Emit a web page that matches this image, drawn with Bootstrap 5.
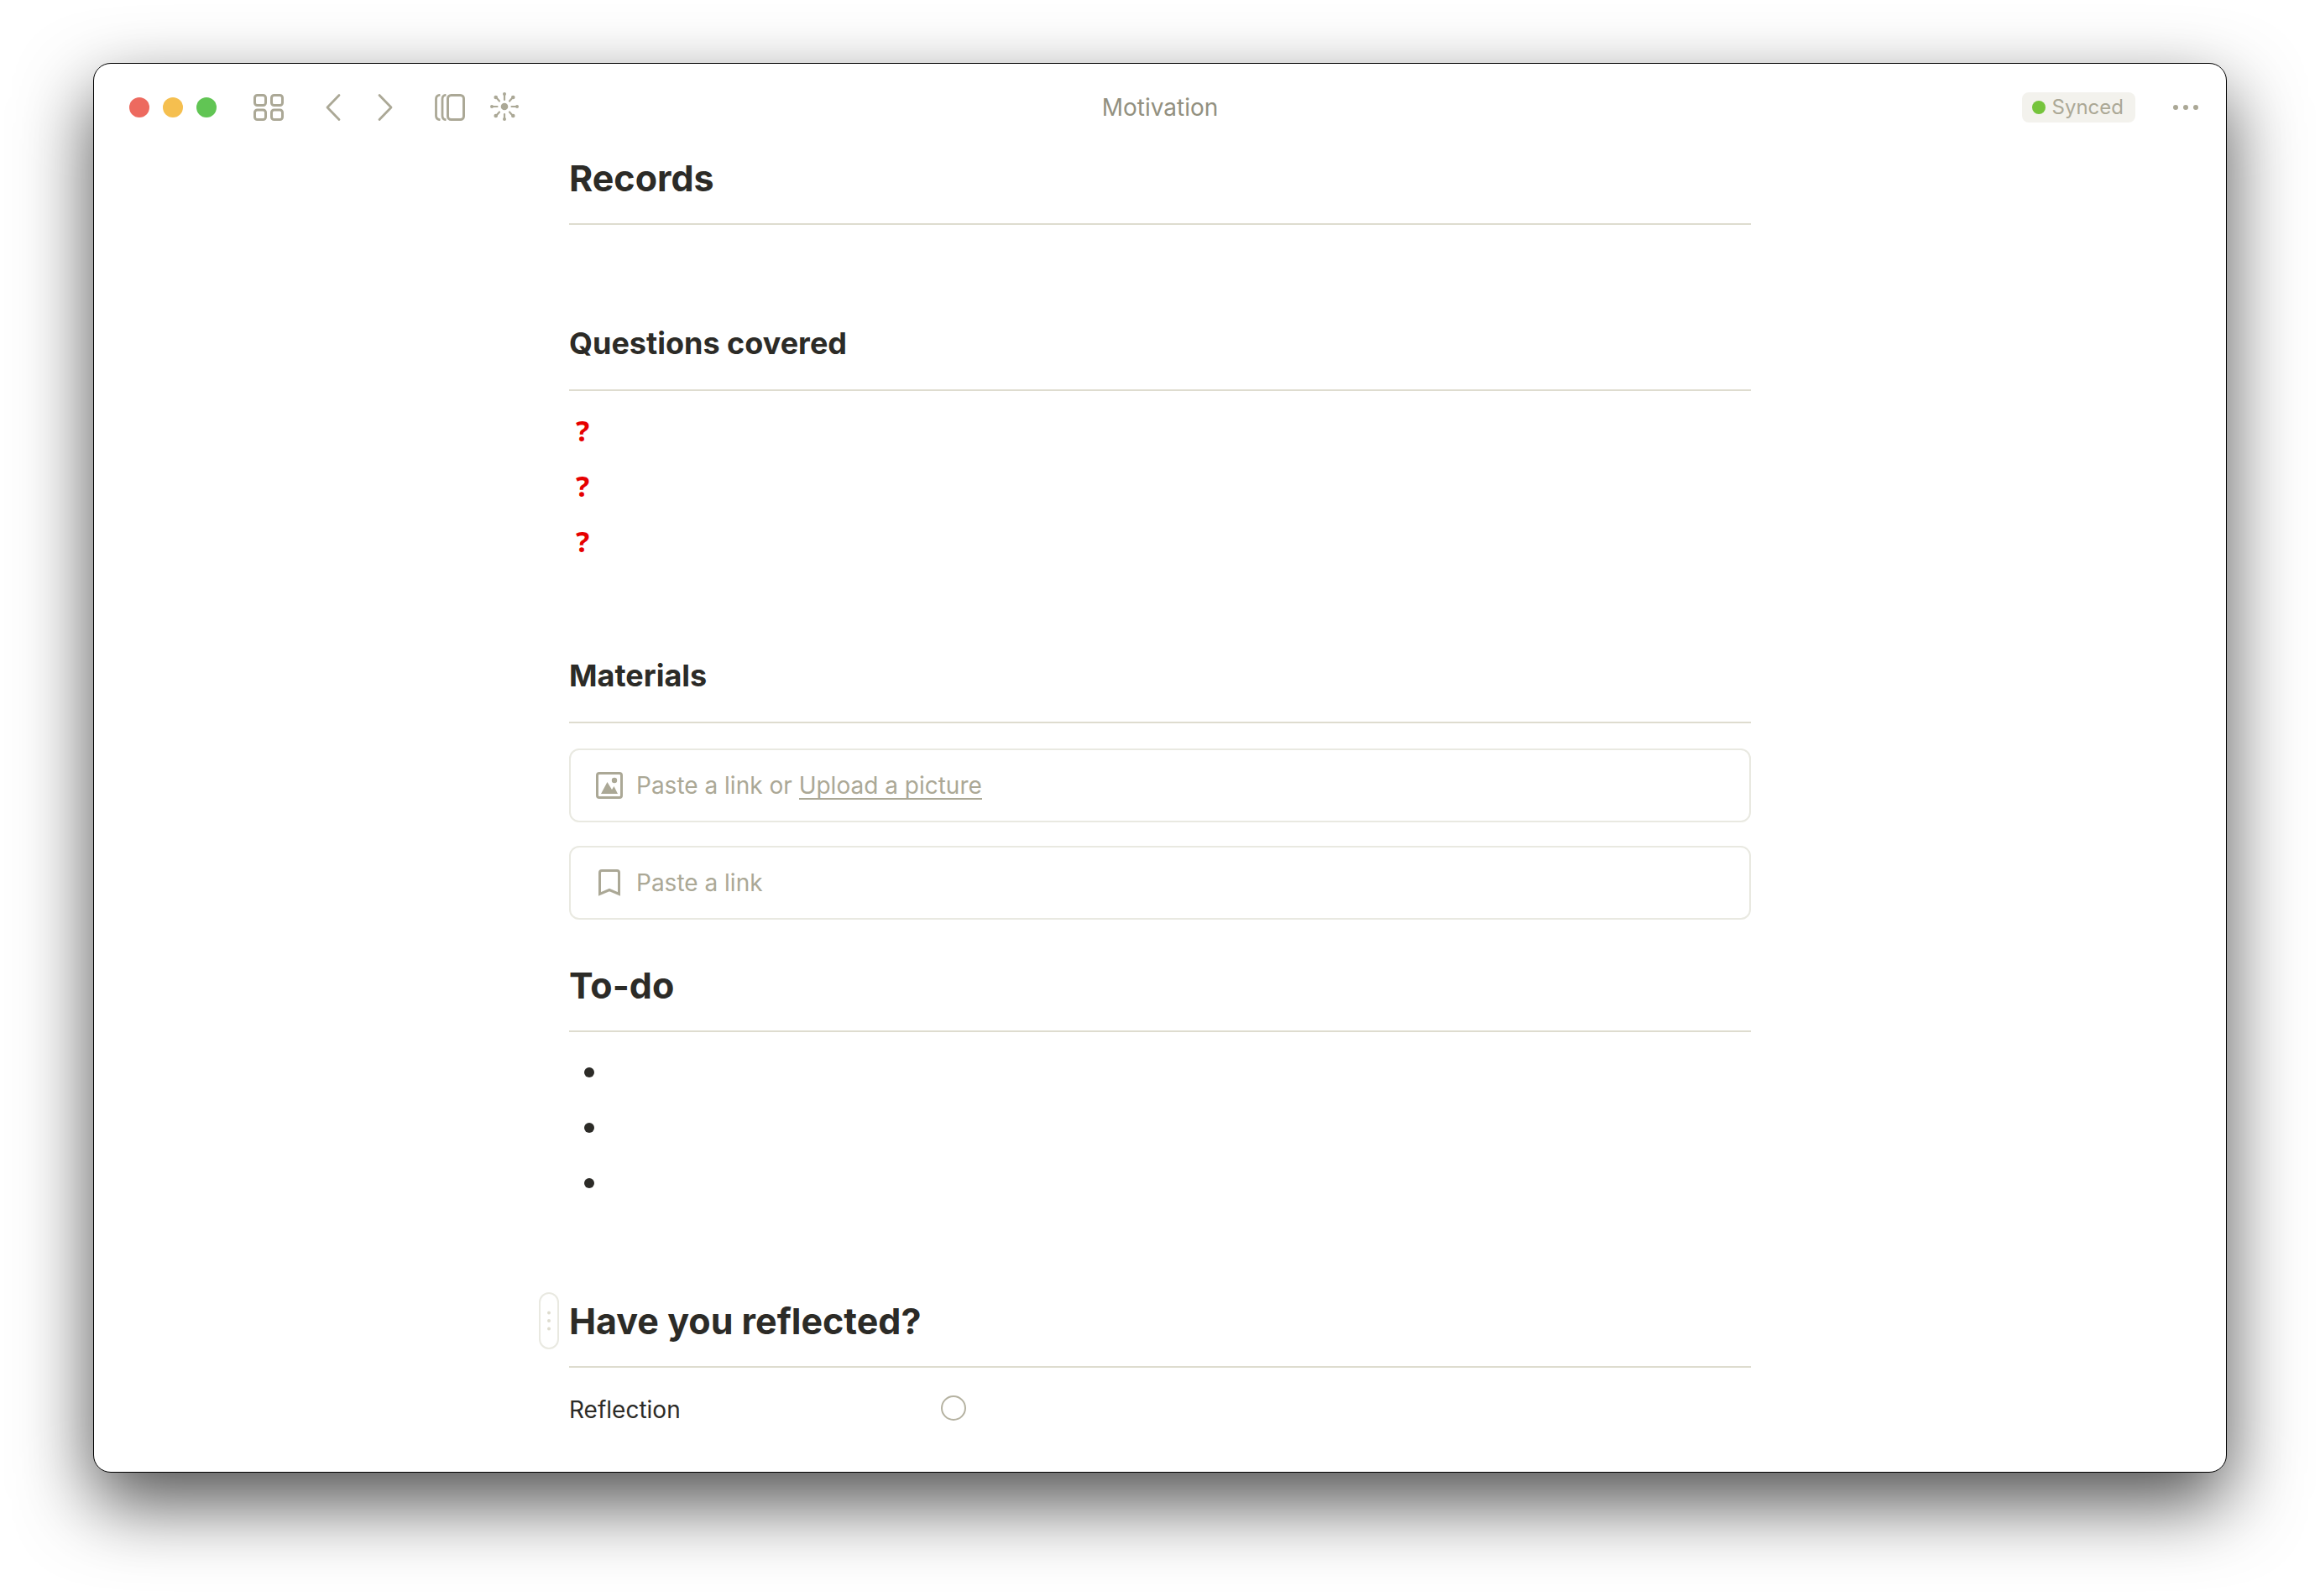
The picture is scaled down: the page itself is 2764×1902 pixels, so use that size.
<!DOCTYPE html>
<html lang="en">
<head>
<meta charset="utf-8">
<meta name="viewport" content="width=device-width, initial-scale=1">
<title>Motivation</title>
<link href="https://cdn.jsdelivr.net/npm/bootstrap@5.3.0/dist/css/bootstrap.min.css" rel="stylesheet">
<style>
  :root { --ink: #2c2b27; --muted: #aba896; --rule: #dedccf; --edge: #e9e9e1; }
  body { font-family: Inter, "Liberation Sans", sans-serif; font-size: 28px; line-height: 36px; color: var(--ink); background: #fff; padding: 75px 111px 147px; }
  .app-window { border: 1px solid #000; border-radius: 21px; background: #fff; box-shadow: 0 36px 88px rgba(0,0,0,.69); }
  .titlebar { height: 104px; padding: 0 33px; }
  .side { flex: 1 1 0; }
  .lights { margin: 0 44px 0 9px; }
  .light { width: 24px; height: 24px; border-radius: 50%; border: 0; padding: 0; }
  .light-close { background: #ed6a5f; }
  .light-min { background: #f5bf4f; }
  .light-zoom { background: #61c554; }
  .tool { border: 0; padding: 0; background: none; color: var(--muted); display: flex; }
  .tool svg, .field svg, .grip svg { display: block; }
  .history { gap: 44px; margin: 0 50px; }
  .views { gap: 30px; }
  .doc-title { color: #929080; }
  .sync { height: 36px; padding: 0 14px 0 12px; gap: 8px; border-radius: 8px; background: #f3f2ed; color: var(--muted); font-size: 24px; margin-right: 45px; }
  .sync-dot { width: 16px; height: 16px; border-radius: 50%; background: #75c43c; }
  .doc { max-width: 1408px; padding: 4px 0 43px; }
  .doc h2, .doc h3 { font-weight: 700; margin: 0; border-bottom: 2px solid var(--rule); }
  .doc h2 { font-size: 43px; line-height: 56px; padding-bottom: 26px; }
  .doc h3 { font-size: 36px; line-height: 48px; padding-bottom: 31px; margin-top: 36px; }
  .block-list { margin: 15px 0 0; }
  .block-list li, .blank { height: 66px; }
  .after-rule { margin-top: 15px; }
  .question { color: #e60000; font-family: "Noto Sans", sans-serif; font-weight: 700; font-size: 34px; padding: 0 0 2px 8px; }
  .bullet { width: 12px; height: 12px; border-radius: 50%; background: var(--ink); margin-left: 18px; }
  .fields { margin: 30px 0 50px; gap: 28px; }
  .field { height: 88px; border: 2px solid var(--edge); border-radius: 12px; padding: 0 30px; gap: 16px; color: var(--muted); }
  .field a { color: inherit; text-decoration: none; border-bottom: 2px solid var(--muted); line-height: 30px; display: inline-block; }
  .field input { border: 0; padding: 0; outline: 0; background: none; color: inherit; line-height: 36px; }
  .field input::placeholder { color: var(--muted); opacity: 1; }
  .active-block { margin-top: 37px; }
  .grip { left: -36px; top: -6px; width: 24px; height: 68px; border: 2px solid var(--edge); border-radius: 12px; background: #fff; padding: 0; color: #dedccf; display: flex; align-items: center; justify-content: center; }
  .prop { height: 66px; }
  .prop label { width: 443px; }
  .tick { appearance: none; width: 30px; height: 30px; margin: 0; border: 2px solid #b5b2a1; border-radius: 50%; background: #fff; }
</style>
</head>
<body>
<div class="app-window">
  <header class="titlebar d-flex align-items-center">
    <div class="side d-flex align-items-center">
      <div class="lights d-flex gap-3">
        <button class="light light-close" aria-label="Close"></button>
        <button class="light light-min" aria-label="Minimise"></button>
        <button class="light light-zoom" aria-label="Zoom"></button>
      </div>
      <button class="tool" aria-label="Home">
        <svg width="36" height="32" fill="none" stroke="currentColor" stroke-width="3"><rect x="1.5" y="1.5" width="13" height="12" rx="3"/><rect x="21.5" y="1.5" width="13" height="12" rx="3"/><rect x="1.5" y="19" width="13" height="11.5" rx="3"/><rect x="21.5" y="19" width="13" height="11.5" rx="3"/></svg>
      </button>
      <div class="history d-flex">
        <button class="tool" aria-label="Back">
          <svg width="18" height="34" fill="none" stroke="currentColor" stroke-width="2.8" stroke-linecap="round" stroke-linejoin="round"><path d="M16 2.500L2 17l14 14.500"/></svg>
        </button>
        <button class="tool" aria-label="Forward">
          <svg width="18" height="34" fill="none" stroke="currentColor" stroke-width="2.8" stroke-linecap="round" stroke-linejoin="round"><path d="M2 2.500L16 17 2 31.500"/></svg>
        </button>
      </div>
      <div class="views d-flex align-items-center">
        <button class="tool" aria-label="Documents">
          <svg width="36" height="32" fill="none" stroke="currentColor" stroke-width="3"><rect x="15.500" y="1.500" width="19" height="29" rx="4"/><path stroke-width="2.800" d="M13.500 1.200C10.500 1.500 9 3 9 6v20c0 3 1.500 4.500 4.500 4.800M6.500 1.200C3.500 1.500 1.500 3 1.500 6v20c0 3 2 4.500 5 4.800"/></svg>
        </button>
        <button class="tool" aria-label="Focus">
          <svg width="34" height="36" viewBox="-17 -17 34 36" fill="currentColor" stroke="currentColor" stroke-width="2.200" stroke-linecap="round"><circle r="4.300" stroke="none"/><path fill="none" d="M0-8v-7M0 9v6M-8.500 0h-6M8.500 0h6M-6-6.500l-4-4.500M6-6.500l4-4.500M-6 6.500l-4 4.500M6 6.500l4 4.500"/><g stroke="none"><circle cy="-15" r="2"/><circle cy="15" r="2"/><circle cx="-15" r="2"/><circle cx="15" r="2"/><circle cx="-10.300" cy="-11" r="2.300"/><circle cx="10.300" cy="-11" r="2.300"/><circle cx="-10.300" cy="11" r="2.300"/><circle cx="10.300" cy="11" r="2.300"/></g></svg>
        </button>
      </div>
    </div>
    <div class="doc-title">Motivation</div>
    <div class="side d-flex align-items-center justify-content-end">
      <div class="sync d-flex align-items-center"><span class="sync-dot"></span><span>Synced</span></div>
      <button class="tool" aria-label="More">
        <svg width="30" height="6" fill="currentColor"><circle cx="3" cy="3" r="3"/><circle cx="15" cy="3" r="3"/><circle cx="27" cy="3" r="3"/></svg>
      </button>
    </div>
  </header>

  <main class="doc mx-auto">
    <h2>Records</h2>
    <div class="blank after-rule"></div>

    <h3>Questions covered</h3>
    <ul class="block-list list-unstyled">
      <li class="question d-flex align-items-center">?</li>
      <li class="question d-flex align-items-center">?</li>
      <li class="question d-flex align-items-center">?</li>
    </ul>
    <div class="blank"></div>

    <h3>Materials</h3>
    <div class="fields d-flex flex-column">
      <div class="field d-flex align-items-center">
        <svg width="32" height="32" fill="currentColor"><rect x="1.500" y="1.500" width="29" height="29" rx="2.500" fill="none" stroke="currentColor" stroke-width="3"/><circle cx="22" cy="10" r="3.200"/><path d="M6 26l7.500-14 5.500 9 2.500-4 4.500 9z"/></svg>
        <div>Paste a link or <a href="#">Upload a picture</a></div>
      </div>
      <label class="field d-flex align-items-center">
        <svg width="32" height="32" fill="none" stroke="currentColor" stroke-width="3"><path d="M4.500 29.500V4q0-2.500 2.500-2.500h18q2.500 0 2.500 2.500v25.500L16 24.500z"/></svg>
        <input class="flex-grow-1" type="url" placeholder="Paste a link" aria-label="Paste a link">
      </label>
    </div>

    <h2>To-do</h2>
    <ul class="block-list list-unstyled">
      <li class="d-flex align-items-center"><span class="bullet"></span></li>
      <li class="d-flex align-items-center"><span class="bullet"></span></li>
      <li class="d-flex align-items-center"><span class="bullet"></span></li>
    </ul>
    <div class="blank"></div>

    <div class="active-block position-relative">
      <button class="grip position-absolute" aria-label="Block menu">
        <svg width="4" height="24" fill="currentColor"><circle cx="2" cy="2.500" r="2"/><circle cx="2" cy="12" r="2"/><circle cx="2" cy="21.500" r="2"/></svg>
      </button>
      <h2>Have you reflected?</h2>
    </div>
    <div class="prop after-rule d-flex align-items-center">
      <label class="pt-1" for="reflection">Reflection</label>
      <input class="tick" type="checkbox" id="reflection">
    </div>
  </main>
</div>
<script src="https://cdn.jsdelivr.net/npm/bootstrap@5.3.0/dist/js/bootstrap.bundle.min.js"></script>
</body>
</html>
